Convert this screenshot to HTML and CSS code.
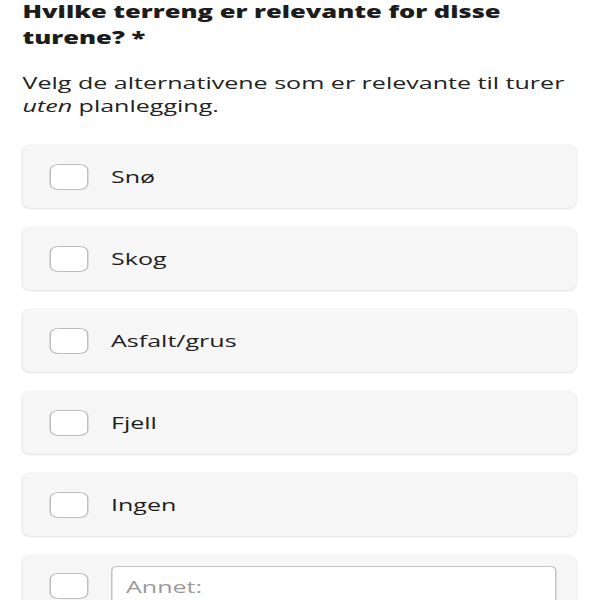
FILE: index.html
```html
<!DOCTYPE html>
<html lang="no">
<head>
<meta charset="utf-8">
<title>Terreng</title>
<link rel="stylesheet" href="styles.css">
</head>
<body>
<main class="page">
  <h1 class="question">Hvilke terreng er relevante for disse turene? *</h1>
  <p class="hint">Velg de alternativene som er relevante til turer <em>uten</em> planlegging.</p>
  <div class="options">
    <label class="option"><span class="box"></span><span class="label">Snø</span></label>
    <label class="option"><span class="box"></span><span class="label">Skog</span></label>
    <label class="option"><span class="box"></span><span class="label">Asfalt/grus</span></label>
    <label class="option"><span class="box"></span><span class="label">Fjell</span></label>
    <label class="option"><span class="box"></span><span class="label">Ingen</span></label>
    <div class="option option-other"><span class="box"></span><input class="other-input" type="text" placeholder="Annet:"></div>
  </div>
</main>
</body>
</html>
```
FILE: styles.css
```css
html, body {
  margin: 0;
  padding: 0;
  background: #ffffff;
  overflow: hidden;
}
body {
  width: 600px;
  height: 600px;
}
.page {
  width: 400px;
  box-sizing: border-box;
  padding: 0 16px 0 15px;
  transform: scaleX(1.5);
  transform-origin: 0 0;
  font-family: "Open Sans", "Liberation Sans", sans-serif;
  color: #1e1e1e;
}
.question {
  margin: -1px 0 0 0;
  font-size: 17px;
  line-height: 26px;
  font-weight: 800;
  color: #1c1c1c;
}
.hint {
  margin: 20px 0 0 0;
  font-size: 16.7px;
  line-height: 23px;
  color: #222;
}
.hint em {
  font-style: italic;
}
.options {
  margin-top: 28px;
  display: flex;
  flex-direction: column;
  gap: 19px;
}
.option {
  display: flex;
  align-items: center;
  box-sizing: border-box;
  min-height: 63px;
  padding: 0 18px;
  background: #f6f6f6;
  border-radius: 6px;
  box-shadow: 0 1px 2px rgba(0, 0, 0, 0.10), 0 0 0 1px rgba(0, 0, 0, 0.025);
}
.box {
  flex: none;
  width: 26px;
  height: 26px;
  box-sizing: border-box;
  border: 1px solid #bdbdbd;
  border-radius: 6px;
  background: #ffffff;
}
.label {
  margin-left: 15px;
  font-size: 16.7px;
  line-height: 22px;
  color: #1e1e1e;
}
.option-other {
  min-height: 62px;
  padding: 11px 13px 11px 18px;
  align-items: center;
}
.other-input {
  margin-left: 15px;
  flex: 1;
  height: 40px;
  box-sizing: border-box;
  border: 1px solid #c4c4c4;
  border-radius: 4px;
  background: #ffffff;
  padding: 0 9px;
  font-family: "Open Sans", "Liberation Sans", sans-serif;
  font-size: 16.7px;
  color: #222;
}
.other-input::placeholder {
  color: #9a9a9a;
}
```
